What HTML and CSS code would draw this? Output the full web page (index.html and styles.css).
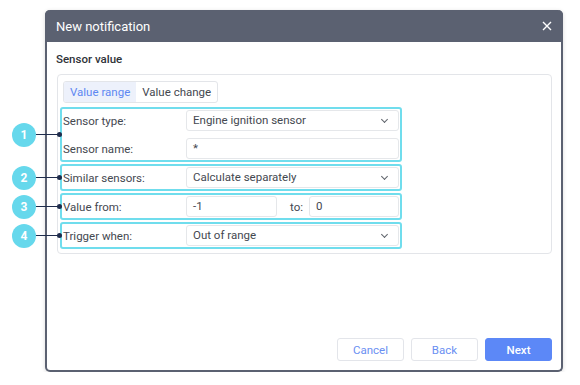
FILE: index.html
```html
<!DOCTYPE html>
<html lang="en">
<head>
    <meta charset="UTF-8">
    <title>New notification</title>
    <link rel="stylesheet" href="styles.css">
</head>
<body>
    <div class="page">
        <div class="dialog">
            <div class="dialog-header">
                <span class="dialog-title">New notification</span>
                <svg class="close-icon" width="10" height="10" viewBox="0 0 10 10">
                    <path d="M1 1 L9 9 M9 1 L1 9" stroke="#ffffff" stroke-width="1.4" fill="none"/>
                </svg>
            </div>
            <div class="dialog-body">
                <div class="section-title">Sensor value</div>
                <div class="card">
                    <div class="tabs">
                        <div class="tab active">Value range</div>
                        <div class="tab">Value change</div>
                    </div>

                    <div class="group">
                        <div class="callout"><span class="badge">1</span><span class="wire"></span><span class="dot"></span></div>
                        <div class="row">
                            <span class="label">Sensor type:</span>
                            <div class="control select">Engine ignition sensor</div>
                        </div>
                        <div class="row">
                            <span class="label">Sensor name:</span>
                            <div class="control">*</div>
                        </div>
                    </div>

                    <div class="group">
                        <div class="callout"><span class="badge">2</span><span class="wire"></span><span class="dot"></span></div>
                        <div class="row">
                            <span class="label">Similar sensors:</span>
                            <div class="control select">Calculate separately</div>
                        </div>
                    </div>

                    <div class="group">
                        <div class="callout"><span class="badge">3</span><span class="wire"></span><span class="dot"></span></div>
                        <div class="row">
                            <span class="label">Value from:</span>
                            <div class="control short">-1</div>
                            <span class="to-label">to:</span>
                            <div class="control">0</div>
                        </div>
                    </div>

                    <div class="group">
                        <div class="callout"><span class="badge">4</span><span class="wire"></span><span class="dot"></span></div>
                        <div class="row">
                            <span class="label">Trigger when:</span>
                            <div class="control select">Out of range</div>
                        </div>
                    </div>
                </div>

                <div class="footer">
                    <button class="btn">Cancel</button>
                    <button class="btn">Back</button>
                    <button class="btn primary">Next</button>
                </div>
            </div>
        </div>
    </div>
</body>
</html>
```

FILE: styles.css
```css
* {
    margin: 0;
    padding: 0;
    box-sizing: border-box;
}

body {
    background: #ffffff;
    font-family: 'Roboto', 'Liberation Sans', sans-serif;
    color: #444850;
}

.page {
    padding: 10px 0 0 45px;
}

.dialog {
    width: 518px;
    height: 362px;
    border: 2px solid #5b6171;
    border-top: none;
    border-radius: 5px;
    background: #ffffff;
    display: flex;
    flex-direction: column;
    box-shadow: 0 1px 4px rgba(0, 0, 0, 0.15);
}

.dialog-header {
    height: 32px;
    margin: 0 -2px;
    padding: 0 11px 0 11px;
    background: #5b6171;
    border-radius: 5px 5px 0 0;
    display: flex;
    align-items: center;
    justify-content: space-between;
}

.dialog-title {
    color: #ffffff;
    font-size: 13px;
}

.dialog-body {
    flex: 1;
    display: flex;
    flex-direction: column;
    padding: 9px 9px 9px 8px;
}

.section-title {
    font-size: 11.5px;
    font-weight: 500;
    color: #2f3338;
    line-height: 16px;
    padding-left: 1px;
    margin-bottom: 7px;
}

.card {
    margin-left: 2px;
    border: 1px solid #e3e5e9;
    border-radius: 4px;
    padding: 6px 2px 4px 2px;
}

.tabs {
    display: inline-flex;
    margin-left: 3px;
    margin-bottom: 4px;
    border: 1px solid #e3e5e9;
    border-radius: 3px;
    overflow: hidden;
    height: 22px;
}

.tab {
    font-size: 11.5px;
    line-height: 20px;
    padding: 0 6px;
    color: #444850;
}

.tab.active {
    background: #edf1fb;
    color: #5e88f2;
}

.group {
    position: relative;
    width: 342px;
    border: 2px solid #70dded;
    border-radius: 3px;
    padding: 1px;
    display: flex;
    flex-direction: column;
    gap: 7px;
    margin-bottom: 2px;
}

.group:last-child {
    margin-bottom: 0;
}

.row {
    display: flex;
    align-items: center;
    height: 21px;
}

.label {
    width: 123px;
    flex: none;
    font-size: 11.5px;
}

.control {
    flex: 1;
    height: 21px;
    border: 1px solid #e5e7ea;
    border-radius: 3px;
    font-size: 11.5px;
    line-height: 19px;
    padding-left: 6px;
    position: relative;
}

.control.short {
    flex: none;
    width: 91px;
}

.select::after {
    content: '';
    position: absolute;
    right: 11px;
    top: 6px;
    width: 4px;
    height: 4px;
    border-right: 1.2px solid #5f646b;
    border-bottom: 1.2px solid #5f646b;
    transform: rotate(45deg);
}

.to-label {
    font-size: 11.5px;
    margin: 0 6px 0 13px;
}

/* annotation markers on the left */
.callout {
    position: absolute;
    left: -50px;
    top: 50%;
    width: 50px;
    height: 24px;
    margin-top: -12px;
}

.badge {
    position: absolute;
    left: 0;
    top: 0;
    width: 24px;
    height: 24px;
    border-radius: 50%;
    background: #66d8ec;
    color: #ffffff;
    font-size: 12px;
    font-weight: 700;
    line-height: 24px;
    text-align: center;
}

.wire {
    position: absolute;
    left: 24px;
    top: 11px;
    width: 24px;
    height: 1.5px;
    background: #1f2c4c;
}

.dot {
    position: absolute;
    left: 45px;
    top: 9.5px;
    width: 5px;
    height: 5px;
    border-radius: 50%;
    background: #1f2c4c;
}

.footer {
    margin-top: auto;
    display: flex;
    justify-content: flex-end;
    gap: 7px;
}

.btn {
    width: 67px;
    height: 23px;
    border: 1px solid #e3e5ea;
    border-radius: 3px;
    background: #ffffff;
    color: #6a8ff2;
    font-family: 'Roboto', 'Liberation Sans', sans-serif;
    font-size: 11.5px;
}

.btn.primary {
    background: #5c88f7;
    border-color: #5c88f7;
    color: #ffffff;
    font-weight: 500;
}
```
